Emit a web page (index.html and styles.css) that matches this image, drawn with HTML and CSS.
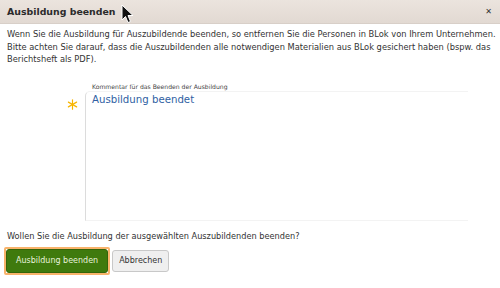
FILE: index.html
```html
<!DOCTYPE html>
<html lang="de">
<head>
  <meta charset="UTF-8">
  <title>Ausbildung beenden</title>
  <link rel="stylesheet" href="styles.css">
</head>
<body>
  <div class="dialog">
    <div class="titlebar">
      <span class="title">Ausbildung beenden</span>
      <span class="close">&#x2715;</span>
    </div>
    <div class="content">
      <p class="intro">Wenn Sie die Ausbildung für Auszubildende beenden, so entfernen Sie die Personen in BLok von Ihrem Unternehmen. Bitte achten Sie darauf, dass die Auszubildenden alle notwendigen Materialien aus BLok gesichert haben (bspw. das Berichtsheft als PDF).</p>

      <div class="field">
        <div class="required">
          <svg width="11" height="11" viewBox="0 0 12 12">
            <g stroke="#f7b500" stroke-width="1.3" stroke-linecap="round">
              <line x1="6" y1="0.8" x2="6" y2="11.2"/>
              <line x1="1.5" y1="3.4" x2="10.5" y2="8.6"/>
              <line x1="1.5" y1="8.6" x2="10.5" y2="3.4"/>
            </g>
          </svg>
        </div>
        <div class="field-body">
          <label class="field-label">Kommentar für das Beenden der Ausbildung</label>
          <div class="textarea">Ausbildung beendet</div>
        </div>
      </div>

      <p class="question">Wollen Sie die Ausbildung der ausgewählten Auszubildenden beenden?</p>

      <div class="buttons">
        <span class="btn-focus"><button class="btn btn-primary">Ausbildung beenden</button></span>
        <button class="btn btn-default">Abbrechen</button>
      </div>
    </div>
  </div>

  <svg class="cursor" width="13" height="20" viewBox="0 0 13 20">
    <path d="M1 1 L1 16 L4.5 12.5 L7 18.5 L9.5 17.5 L7 11.5 L12 11.5 Z" fill="#111" stroke="#fff" stroke-width="1"/>
  </svg>
</body>
</html>
```

FILE: styles.css
```css
body {
  margin: 0;
  padding: 0;
  background-color: #fff;
  font-family: "DejaVu Sans", Verdana, sans-serif;
  color: #333;
}

.dialog {
  width: 500px;
  height: 288px;
  overflow: hidden;
}

.titlebar {
  height: 24px;
  display: flex;
  align-items: center;
  justify-content: space-between;
  padding: 0 8px 0 7px;
  background: linear-gradient(#ebe4de, #e2d9d2);
  border-bottom: 1px solid #d8cfc8;
  box-sizing: border-box;
}

.title {
  font-size: 9.4px;
  font-weight: bold;
  color: #2b2b2b;
}

.close {
  font-size: 8px;
  color: #333;
  font-weight: bold;
}

.content {
  padding: 4px 2px 0 7px;
}

.intro {
  margin: 0;
  font-size: 8.3px;
  line-height: 12.5px;
}

.field {
  display: flex;
  margin-top: 16px;
}

.required {
  width: 78px;
  padding-top: 13px;
  text-align: right;
  padding-right: 7px;
  box-sizing: border-box;
}

.field-body {
  width: 383px;
}

.field-label {
  display: block;
  font-size: 6.1px;
  color: #444;
  padding-left: 7px;
  height: 9px;
  line-height: 9px;
}

.textarea {
  height: 130px;
  box-sizing: border-box;
  border: 1px solid #f3f3f3;
  border-right: none;
  border-left-color: #dcdcdc;
  border-radius: 5px 0 0 0;
  padding: 2px 6px;
  font-size: 10.2px;
  color: #2f5fa3;
}

.question {
  margin: 9px 0 0 0;
  font-size: 8.2px;
  line-height: 12px;
}

.buttons {
  display: flex;
  align-items: center;
  gap: 2px;
  margin-top: 5px;
  margin-left: -3px;
}

.btn-focus {
  display: inline-block;
  border: 2px solid #f8b36b;
  border-radius: 2px;
  padding: 0;
}

.btn {
  font-family: "DejaVu Sans", Verdana, sans-serif;
  font-size: 8px;
  border-radius: 3px;
  cursor: pointer;
}

.btn-primary {
  display: block;
  height: 24px;
  padding: 0 9px;
  background-color: #3f7a0d;
  border: 1px solid #336509;
  color: #e8f2dc;
}

.btn-default {
  height: 22px;
  padding: 0 6px;
  background-color: #efefef;
  border: 1px solid #c8c8c8;
  color: #333;
}

.cursor {
  position: absolute;
  left: 121px;
  top: 4px;
}
```
